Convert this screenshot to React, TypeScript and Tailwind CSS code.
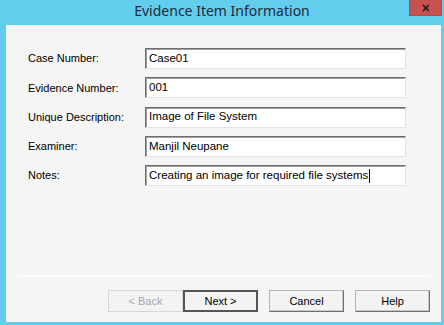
import { X } from "lucide-react";

const fields = [
  { label: "Case Number:", value: "Case01" },
  { label: "Evidence Number:", value: "001" },
  { label: "Unique Description:", value: "Image of File System" },
  { label: "Examiner:", value: "Manjil Neupane" },
  { label: "Notes:", value: "Creating an image for required file systems", caret: true },
];

const btn =
  "w-[75px] h-[22px] bg-[#f3f3f3] border border-[#b4b4b4] border-r-[#6f6f6f] border-b-[#6f6f6f] shadow-[inset_-1px_-1px_0_#c8c8c8] text-[11px] text-black flex items-center justify-center";

const App = () => {
  return (
    <div className="w-[444px] h-[325px] bg-[#63cdee] flex flex-col font-['Liberation_Sans',Arial,sans-serif]">
      {/* Title bar */}
      <div className="relative h-[25px] flex items-start justify-center pt-px">
        <span className="text-[14px] leading-[19px] text-[#1c2b3a] font-['Noto_Sans',sans-serif]">
          Evidence Item Information
        </span>
        <div className="absolute right-[2px] top-0 w-[33px] h-[16px] bg-[#c75050] border border-t-0 border-[#b54848] flex items-center justify-center">
          <X size={10} strokeWidth={4} className="text-[#1a1a1a]" />
        </div>
      </div>

      {/* Client area */}
      <div className="flex-1 ml-[6px] mr-[3px] mb-[3px] bg-[#f5f5f5] flex flex-col">
        <div className="pt-[23px] pl-[22px] flex flex-col gap-[8.3px]">
          {fields.map((f) => (
            <div key={f.label} className="flex items-center h-[21px]">
              <span className="w-[117px] text-[11px] text-black">{f.label}</span>
              <div className="w-[261px] h-[21px] bg-white border border-[#6d6d6d] border-r-[#e3e3e3] border-b-[#e3e3e3] shadow-[inset_1px_1px_0_#a0a0a0] flex items-center pl-[3px] text-[11.5px] text-black">
                {f.value}
                {f.caret && <span className="inline-block w-px h-[14px] bg-black ml-[1px]" />}
              </div>
            </div>
          ))}
        </div>

        {/* Separator */}
        <div className="mt-auto mx-[11px] h-px bg-[#a0a0a0] border-b border-white" />

        {/* Buttons */}
        <div className="flex justify-end items-center pt-[13px] pb-[10px] pr-[11px]">
          <div className="w-[75px] h-[22px] bg-[#f3f3f3] border border-[#d6d6d6] text-[11px] text-[#a6a6a6] flex items-center justify-center">
            &lt; Back
          </div>
          <div className="w-[75px] h-[22px] bg-[#f3f3f3] border-2 border-[#555555] text-[11px] text-black flex items-center justify-center">
            Next &gt;
          </div>
          <div className={btn + " ml-[11px]"}>Cancel</div>
          <div className={btn + " ml-[11px]"}>Help</div>
        </div>
      </div>
    </div>
  );
};

export default App;
